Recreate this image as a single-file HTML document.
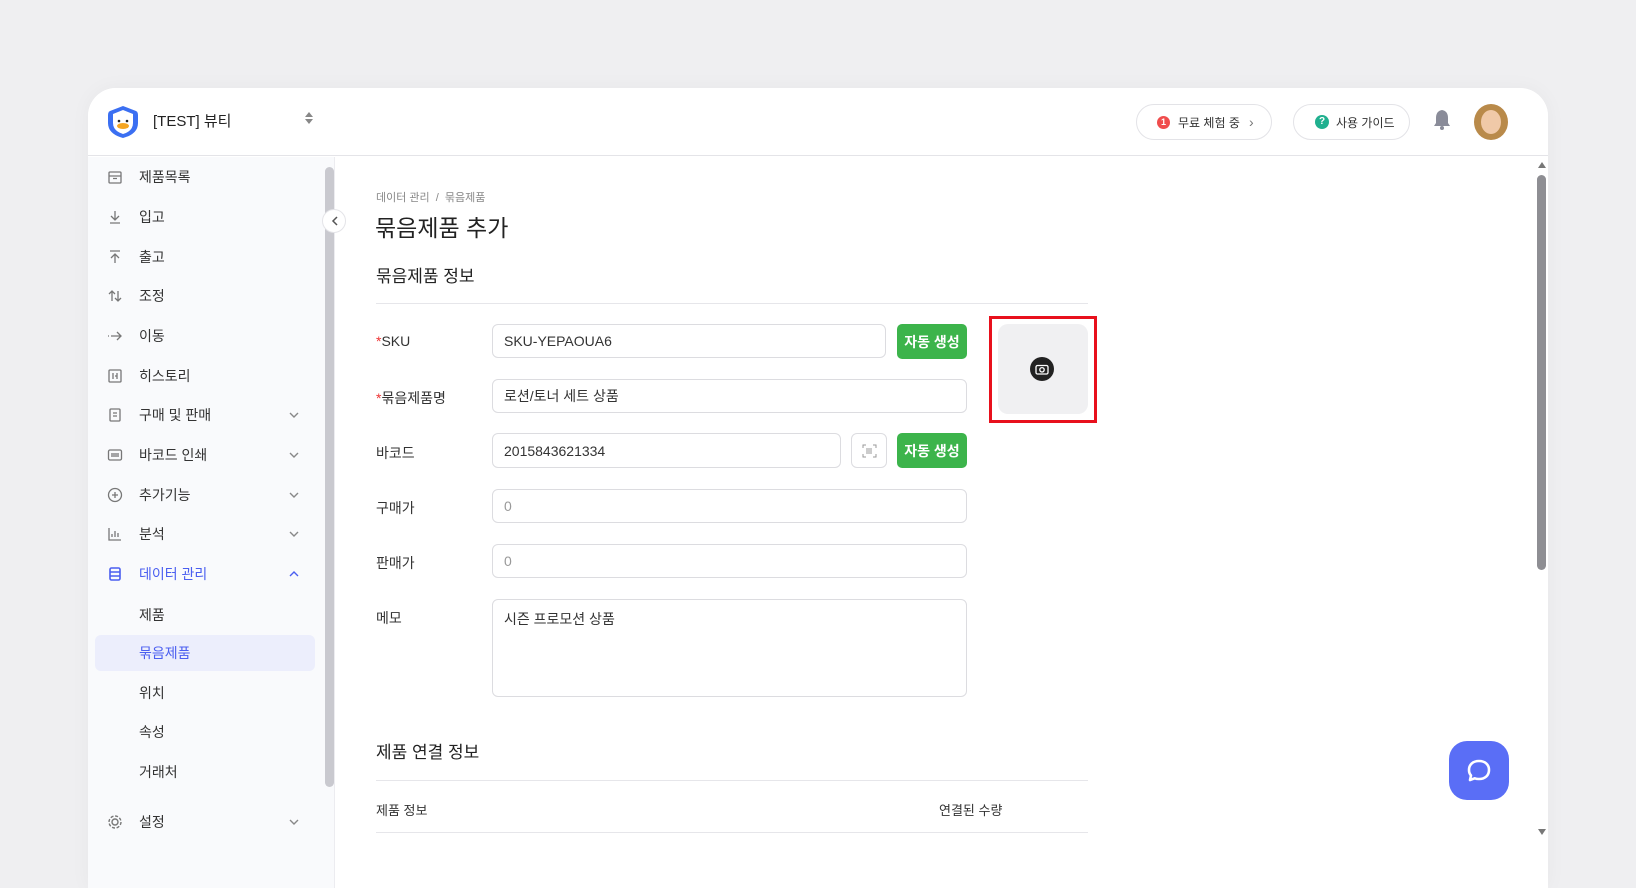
<!DOCTYPE html>
<html><head><meta charset="utf-8"><style>
*{box-sizing:border-box;margin:0;padding:0}
body{width:1636px;height:840px;background:#efeff1;font-family:"Liberation Sans","Noto Sans CJK KR",sans-serif;position:relative;overflow:hidden;color:#222}
.win{position:absolute;left:88px;top:88px;width:1460px;height:800px;background:#fff;border-radius:28px 28px 0 0;overflow:hidden;box-shadow:0 0 20px rgba(0,0,0,.04)}
.hdr{position:absolute;left:0;top:0;right:0;height:68px;border-bottom:1px solid #e4e4e8;background:#fff}
.side{position:absolute;left:0;top:69px;width:247px;bottom:0;background:#f9fafc;border-right:1px solid #ececf0}
.abs{position:absolute}
.it{position:absolute;left:0;height:36px;width:232px;font-size:14px;color:#333;display:flex;align-items:center;margin-top:2px}
.it .ic{position:absolute;left:19px;top:10px;width:16px;height:16px}
.it .tx{position:absolute;left:51px}
.it .ch{position:absolute;left:200px;top:12px}
.lbl{position:absolute;left:288px;font-size:14px;color:#333}
.inp{position:absolute;border:1px solid #dcdce0;border-radius:6px;background:#fff;font-size:14px;color:#333;padding-left:11px;display:flex;align-items:center}
.btn{position:absolute;background:#3cb44b;color:#fff;border-radius:5px;font-size:14px;font-weight:bold;display:flex;align-items:center;justify-content:center;width:70px;height:35px}
.pill{position:absolute;border:1px solid #e3e3e7;border-radius:18px;height:36px;top:16px;font-size:12px;color:#333;display:flex;align-items:center}
</style></head><body>
<div class="win">
 <div class="hdr">
  <svg class="abs" style="left:17px;top:16px" width="36" height="36" viewBox="0 0 36 36"><path d="M18 2 L31 7 Q33 8 33 11 V19 Q33 30 18 34 Q3 30 3 19 V11 Q3 8 5 7Z" fill="#3b6ff2"/><path d="M18 6 L28 10 V19 Q28 27 18 30 Q8 27 8 19 V10Z" fill="#fff"/><circle cx="14" cy="17" r="1.3" fill="#222"/><circle cx="22" cy="17" r="1.3" fill="#222"/><ellipse cx="18" cy="22" rx="6" ry="3" fill="#f5a623"/></svg>
  <div class="abs" style="left:65px;top:22px;font-size:15px;color:#222">[TEST] 뷰티</div>
  <svg class="abs" style="left:216px;top:22px" width="10" height="16" viewBox="0 0 10 16"><path d="M5 2 L9 7 H1Z M5 14 L9 9 H1Z" fill="#888"/></svg>
  <div class="pill" style="left:1048px;width:136px"><span style="position:absolute;left:20px;top:11px;width:13px;height:13px;border-radius:50%;background:#f04d4d;color:#fff;font-size:9px;text-align:center;line-height:13px;font-weight:bold">1</span><span style="position:absolute;left:41px">무료 체험 중</span><span style="position:absolute;left:112px;color:#777;font-size:14px">›</span></div>
  <div class="pill" style="left:1205px;width:117px"><span style="position:absolute;left:21px;top:10px;width:14px;height:14px;border-radius:50%;background:#20b08f;color:#fff;font-size:10px;text-align:center;line-height:14px;font-weight:bold">?</span><span style="position:absolute;left:42px">사용 가이드</span></div>
  <svg class="abs" style="left:1345px;top:21px" width="18" height="22" viewBox="0 0 18 22"><path d="M9 1 Q3 2 3 9 V14 L1 17 H17 L15 14 V9 Q15 2 9 1Z" fill="#8a8c99"/><circle cx="9" cy="19" r="2" fill="#8a8c99"/></svg>
  <div class="abs" style="left:1386px;top:16px;width:34px;height:36px;border-radius:50%;background:#b98a4a;overflow:hidden"><div style="position:absolute;left:7px;top:6px;width:20px;height:24px;border-radius:50%;background:#f0c9a8"></div></div>
 </div>
 <div class="side">
  <div class="abs" style="left:237px;top:10px;width:9px;height:620px;border-radius:5px;background:#c9c9cf"></div>
  <div class="it" style="top:0px"><svg class="ic" viewBox="0 0 16 16" fill="none" stroke="#777" stroke-width="1.3"><rect x="2" y="3" width="12" height="11" rx="1"/><path d="M2 7h12M6 9.5h4"/></svg><span class="tx">제품목록</span></div>
  <div class="it" style="top:40px"><svg class="ic" viewBox="0 0 16 16" fill="none" stroke="#777" stroke-width="1.3"><path d="M8 2v9M4 7l4 4 4-4M3 14h10"/></svg><span class="tx">입고</span></div>
  <div class="it" style="top:80px"><svg class="ic" viewBox="0 0 16 16" fill="none" stroke="#777" stroke-width="1.3"><path d="M8 14V5M4 9l4-4 4 4M3 2h10"/></svg><span class="tx">출고</span></div>
  <div class="it" style="top:119px"><svg class="ic" viewBox="0 0 16 16" fill="none" stroke="#777" stroke-width="1.3"><path d="M5 13V3M2 6l3-3 3 3M11 3v10M8 10l3 3 3-3"/></svg><span class="tx">조정</span></div>
  <div class="it" style="top:159px"><svg class="ic" viewBox="0 0 16 16" fill="none" stroke="#777" stroke-width="1.3"><path d="M1 8h1M4 8h10M10 4l4 4-4 4"/></svg><span class="tx">이동</span></div>
  <div class="it" style="top:199px"><svg class="ic" viewBox="0 0 16 16" fill="none" stroke="#777" stroke-width="1.3"><rect x="2" y="2" width="12" height="12" rx="1"/><path d="M6 5v6M10 5v6M8 8h2"/></svg><span class="tx">히스토리</span></div>
  <div class="it" style="top:238px"><svg class="ic" viewBox="0 0 16 16" fill="none" stroke="#777" stroke-width="1.3"><rect x="3" y="2" width="10" height="12" rx="1"/><path d="M6 6h4M6 9h4"/></svg><span class="tx">구매 및 판매</span><svg class="ch" width="12" height="12" viewBox="0 0 12 12"><path d="M2 4l4 4 4-4" stroke="#888" stroke-width="1.4" fill="none"/></svg></div>
  <div class="it" style="top:278px"><svg class="ic" viewBox="0 0 16 16" fill="none" stroke="#777" stroke-width="1.3"><rect x="1.5" y="3" width="13" height="10" rx="1.5"/><path d="M5 6v4M7 6v4M9 6v4M11 6v4"/></svg><span class="tx">바코드 인쇄</span><svg class="ch" width="12" height="12" viewBox="0 0 12 12"><path d="M2 4l4 4 4-4" stroke="#888" stroke-width="1.4" fill="none"/></svg></div>
  <div class="it" style="top:318px"><svg class="ic" viewBox="0 0 16 16" fill="none" stroke="#777" stroke-width="1.3"><circle cx="8" cy="8" r="6.5"/><path d="M8 5v6M5 8h6"/></svg><span class="tx">추가기능</span><svg class="ch" width="12" height="12" viewBox="0 0 12 12"><path d="M2 4l4 4 4-4" stroke="#888" stroke-width="1.4" fill="none"/></svg></div>
  <div class="it" style="top:357px"><svg class="ic" viewBox="0 0 16 16" fill="none" stroke="#777" stroke-width="1.3"><path d="M2 2v12h12M5 11V8M8 11V5M11 11V7"/></svg><span class="tx">분석</span><svg class="ch" width="12" height="12" viewBox="0 0 12 12"><path d="M2 4l4 4 4-4" stroke="#888" stroke-width="1.4" fill="none"/></svg></div>
  <div class="it" style="top:397px;color:#4a5ef0"><svg class="ic" viewBox="0 0 16 16" fill="none" stroke="#4a5ef0" stroke-width="1.6"><rect x="3" y="2" width="10" height="12" rx="1.5"/><path d="M3 6h10M3 10h10"/></svg><span class="tx">데이터 관리</span><svg class="ch" width="12" height="12" viewBox="0 0 12 12"><path d="M2 8l4-4 4 4" stroke="#4a5ef0" stroke-width="1.4" fill="none"/></svg></div>
  <div class="it" style="top:438px"><span class="tx">제품</span></div>
  <div class="abs" style="left:7px;top:478px;width:220px;height:36px;border-radius:6px;background:#eceefc"></div>
  <div class="it" style="top:476px;color:#4a5ef0"><span class="tx">묶음제품</span></div>
  <div class="it" style="top:516px"><span class="tx">위치</span></div>
  <div class="it" style="top:555px"><span class="tx">속성</span></div>
  <div class="it" style="top:595px"><span class="tx">거래처</span></div>
  <div class="it" style="top:645px"><svg class="ic" viewBox="0 0 16 16" fill="none" stroke="#777" stroke-width="1.4"><circle cx="8" cy="8" r="3"/><circle cx="8" cy="8" r="6" stroke-dasharray="3 1.7"/></svg><span class="tx">설정</span><svg class="ch" width="12" height="12" viewBox="0 0 12 12"><path d="M2 4l4 4 4-4" stroke="#888" stroke-width="1.4" fill="none"/></svg></div>
 </div>
 <div class="abs" style="left:234px;top:121px;width:24px;height:24px;border-radius:50%;background:#fff;border:1px solid #e4e4e8"><svg style="position:absolute;left:6px;top:5px" width="12" height="12" viewBox="0 0 12 12"><path d="M8 2L4 6l4 4" stroke="#555" stroke-width="1.5" fill="none"/></svg></div>
 <div class="abs" style="left:288px;top:101px;font-size:11px;color:#888">데이터 관리 &nbsp;/ &nbsp;묶음제품</div>
 <div class="abs" style="left:287px;top:121px;font-size:23px;color:#222">묶음제품 추가</div>
 <div class="abs" style="left:288px;top:174px;font-size:17px;color:#222">묶음제품 정보</div>
 <div class="abs" style="left:288px;top:215px;width:712px;height:1px;background:#e6e6ea"></div>
 <div class="lbl" style="top:245px"><span style="color:#e33">*</span>SKU</div>
 <div class="inp" style="left:404px;top:236px;width:394px;height:34px">SKU-YEPAOUA6</div>
 <div class="btn" style="left:809px;top:236px">자동 생성</div>
 <div class="lbl" style="top:300px"><span style="color:#e33">*</span>묶음제품명</div>
 <div class="inp" style="left:404px;top:291px;width:475px;height:34px">로션/토너 세트 상품</div>
 <div class="lbl" style="top:355px">바코드</div>
 <div class="inp" style="left:404px;top:345px;width:349px;height:35px">2015843621334</div>
 <div class="abs" style="left:763px;top:345px;width:36px;height:35px;border:1px solid #dcdce0;border-radius:6px;background:#fff"><svg style="position:absolute;left:10px;top:10px" width="15" height="14" viewBox="0 0 15 14" fill="none" stroke="#999" stroke-width="1"><path d="M1 4V1h3M11 1h3v3M14 10v3h-3M4 13H1v-3M5 4v6M7 4v6M9 4v6"/></svg></div>
 <div class="btn" style="left:809px;top:345px">자동 생성</div>
 <div class="lbl" style="top:410px">구매가</div>
 <div class="inp" style="left:404px;top:401px;width:475px;height:34px;color:#999">0</div>
 <div class="lbl" style="top:465px">판매가</div>
 <div class="inp" style="left:404px;top:456px;width:475px;height:34px;color:#999">0</div>
 <div class="lbl" style="top:520px">메모</div>
 <div class="inp" style="left:404px;top:511px;width:475px;height:98px;align-items:flex-start;padding-top:9px">시즌 프로모션 상품</div>
 <div class="abs" style="left:910px;top:236px;width:90px;height:90px;border-radius:10px;background:#f0f0f2"></div>
 <div class="abs" style="left:942px;top:269px;width:24px;height:24px;border-radius:50%;background:#222"><svg style="position:absolute;left:5px;top:6px" width="14" height="12" viewBox="0 0 14 12" fill="none" stroke="#fff" stroke-width="1.3"><rect x="1" y="2.5" width="12" height="8.5" rx="1.5"/><circle cx="7" cy="6.8" r="2.2"/></svg></div>
 <div class="abs" style="left:901px;top:228px;width:108px;height:107px;border:3px solid #e8101c"></div>
 <div class="abs" style="left:288px;top:650px;font-size:17px;color:#222">제품 연결 정보</div>
 <div class="abs" style="left:288px;top:692px;width:712px;height:1px;background:#e6e6ea"></div>
 <div class="abs" style="left:288px;top:712px;font-size:13px;color:#333">제품 정보</div>
 <div class="abs" style="left:851px;top:712px;font-size:13px;color:#333">연결된 수량</div>
 <div class="abs" style="left:288px;top:744px;width:712px;height:1px;background:#e6e6ea"></div>
 <svg class="abs" style="left:1449px;top:73px" width="10" height="8" viewBox="0 0 10 8"><path d="M5 1L9 7H1Z" fill="#777"/></svg>
 <div class="abs" style="left:1449px;top:87px;width:9px;height:395px;border-radius:5px;background:#8e8e93"></div>
 <svg class="abs" style="left:1449px;top:740px" width="10" height="8" viewBox="0 0 10 8"><path d="M5 7L9 1H1Z" fill="#777"/></svg>
</div>
<div class="abs" style="left:1449px;top:741px;width:60px;height:59px;border-radius:18px;background:#5a6ef6"><svg style="position:absolute;left:16px;top:16px" width="28" height="28" viewBox="0 0 28 28" fill="none" stroke="#fff" stroke-width="2.6"><path d="M14 4c6 0 10 3.5 10 9s-4 9-10 9c-1.5 0-3-.2-4.3-.7L5 23l1-4.5C4.7 17 4 15.2 4 13c0-5.5 4-9 10-9z" stroke-linejoin="round"/></svg></div>
</body></html>
